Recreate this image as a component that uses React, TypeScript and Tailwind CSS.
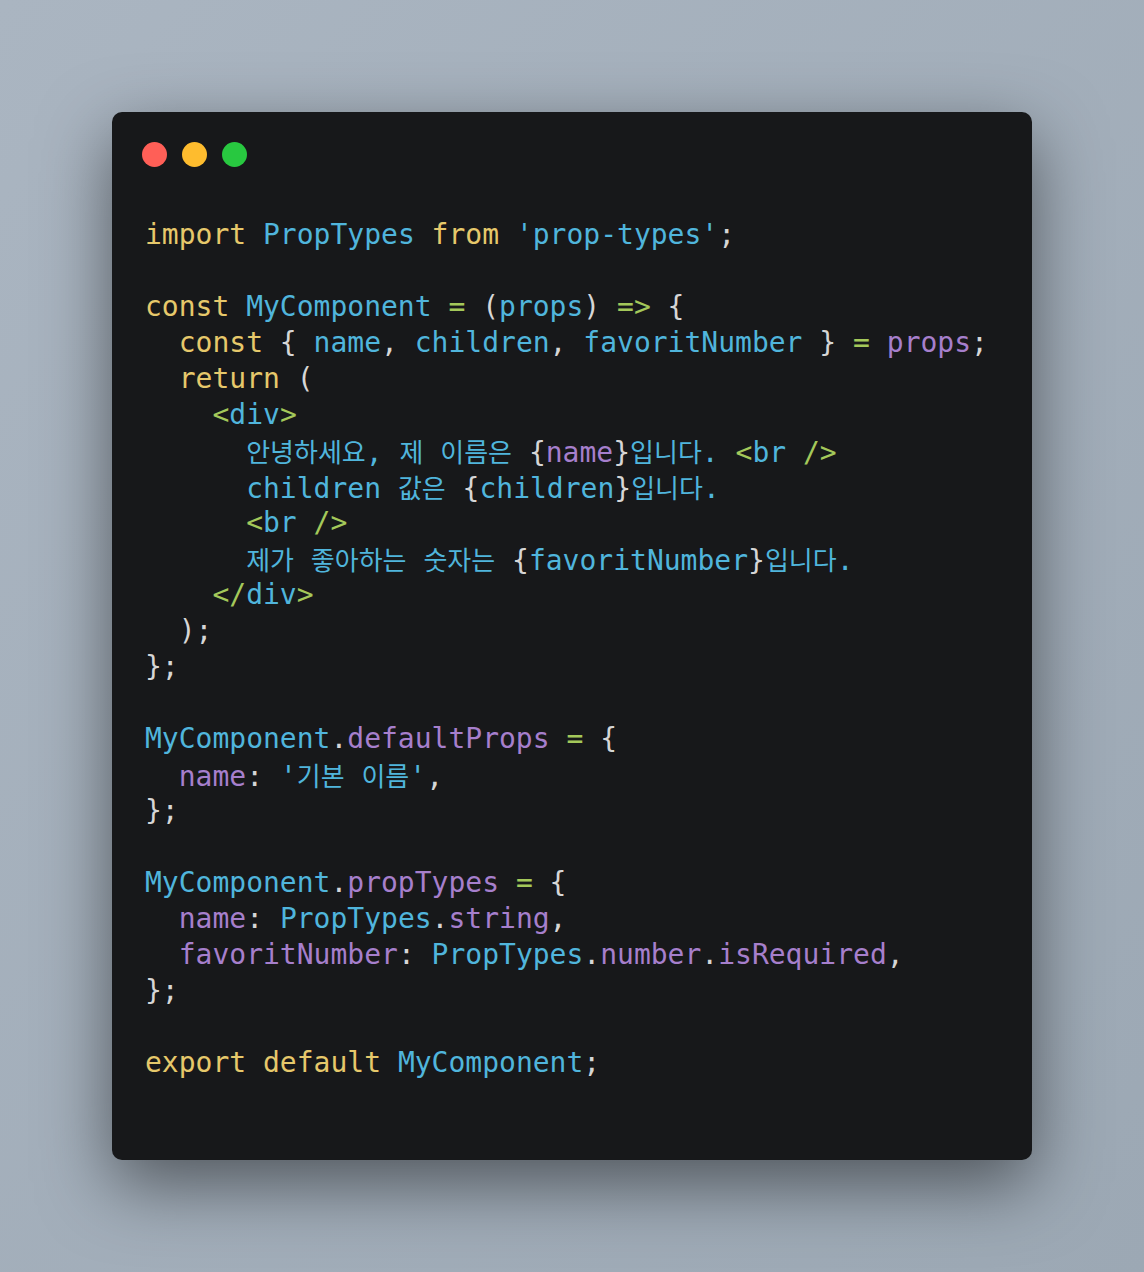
const c = {
  k: "text-[#e6c86b]",
  b: "text-[#50b5dc]",
  p: "text-[#a67fcc]",
  g: "text-[#a4c85a]",
  w: "text-[#d6d6d6]",
};

type Tok = [keyof typeof c, string];

const lines: Tok[][] = [
  [["k", "import"], ["w", " "], ["b", "PropTypes"], ["w", " "], ["k", "from"], ["w", " "], ["b", "'prop-types'"], ["w", ";"]],
  [],
  [["k", "const"], ["w", " "], ["b", "MyComponent"], ["w", " "], ["g", "="], ["w", " ("], ["b", "props"], ["w", ") "], ["g", "=>"], ["w", " {"]],
  [["w", "  "], ["k", "const"], ["w", " { "], ["b", "name"], ["w", ", "], ["b", "children"], ["w", ", "], ["b", "favoritNumber"], ["w", " } "], ["g", "="], ["w", " "], ["p", "props"], ["w", ";"]],
  [["w", "  "], ["k", "return"], ["w", " ("]],
  [["w", "    "], ["g", "<"], ["b", "div"], ["g", ">"]],
  [["w", "      "], ["b", "안녕하세요, 제 이름은 "], ["w", "{"], ["p", "name"], ["w", "}"], ["b", "입니다. "], ["g", "<"], ["b", "br "], ["g", "/>"]],
  [["w", "      "], ["b", "children 값은 "], ["w", "{"], ["b", "children"], ["w", "}"], ["b", "입니다."]],
  [["w", "      "], ["g", "<"], ["b", "br "], ["g", "/>"]],
  [["w", "      "], ["b", "제가 좋아하는 숫자는 "], ["w", "{"], ["b", "favoritNumber"], ["w", "}"], ["b", "입니다."]],
  [["w", "    "], ["g", "</"], ["b", "div"], ["g", ">"]],
  [["w", "  );"]],
  [["w", "};"]],
  [],
  [["b", "MyComponent"], ["w", "."], ["p", "defaultProps"], ["w", " "], ["g", "="], ["w", " {"]],
  [["w", "  "], ["p", "name"], ["w", ": "], ["b", "'기본 이름'"], ["w", ","]],
  [["w", "};"]],
  [],
  [["b", "MyComponent"], ["w", "."], ["p", "propTypes"], ["w", " "], ["g", "="], ["w", " {"]],
  [["w", "  "], ["p", "name"], ["w", ": "], ["b", "PropTypes"], ["w", "."], ["p", "string"], ["w", ","]],
  [["w", "  "], ["p", "favoritNumber"], ["w", ": "], ["b", "PropTypes"], ["w", "."], ["p", "number"], ["w", "."], ["p", "isRequired"], ["w", ","]],
  [["w", "};"]],
  [],
  [["k", "export"], ["w", " "], ["k", "default"], ["w", " "], ["b", "MyComponent"], ["w", ";"]],
];

// hangul runs get a CJK face sized so each syllable takes ~24px like the source
function Text({ s }: { s: string }) {
  const parts = s.split(/([\uac00-\ud7a3]+)/);
  return (
    <>
      {parts.map((part, i) =>
        /[\uac00-\ud7a3]/.test(part) ? (
          <span key={i} className="font-['Noto_Sans_CJK_KR',sans-serif] text-[26px]">
            {part}
          </span>
        ) : (
          <span key={i}>{part}</span>
        )
      )}
    </>
  );
}

export default function App() {
  return (
    <div className="h-[1272px] w-full flex items-center justify-center bg-gradient-to-br from-[#aab5c1] to-[#9ca8b4]">
      <div className="w-[920px] h-[1048px] rounded-[10px] bg-[#17181a] shadow-[0_24px_70px_rgba(0,0,0,0.5)] px-[33px] pt-[30px]">
        <div className="flex gap-[15px] -ml-[3px]">
          <span className="w-[25px] h-[25px] rounded-full bg-[#ff5f57]" />
          <span className="w-[25px] h-[25px] rounded-full bg-[#febc2e]" />
          <span className="w-[25px] h-[25px] rounded-full bg-[#28c840]" />
        </div>
        <div className="mt-[50px] font-['DejaVu_Sans_Mono',monospace] text-[28px] leading-[36px] whitespace-pre">
          {lines.map((line, i) => (
            <div key={i} className="h-[36px]">
              {line.map(([col, s], j) => (
                <span key={j} className={c[col]}>
                  <Text s={s} />
                </span>
              ))}
            </div>
          ))}
        </div>
      </div>
    </div>
  );
}
